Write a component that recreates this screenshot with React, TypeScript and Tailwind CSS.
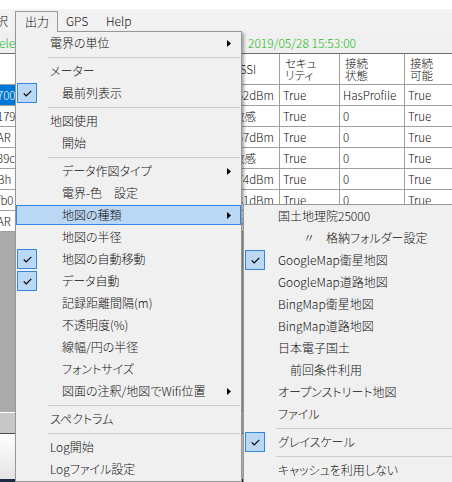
import React from 'react';

type MenuEntry =
  | { sep: true }
  | {
      sep?: false;
      label: React.ReactNode;
      indent?: boolean;
      checked?: boolean;
      sub?: boolean;
      active?: boolean;
    };

const MAIN_MENU: MenuEntry[] = [
  { label: '電界の単位', sub: true },
  { sep: true },
  { label: 'メーター' },
  { label: '最前列表示', indent: true, checked: true },
  { sep: true },
  { label: '地図使用' },
  { label: '開始', indent: true },
  { sep: true },
  { label: 'データ作図タイプ', indent: true, sub: true },
  { label: '電界-色　設定', indent: true },
  { label: '地図の種類', indent: true, sub: true, active: true },
  { label: '地図の半径', indent: true },
  { label: '地図の自動移動', indent: true, checked: true },
  { label: 'データ自動', indent: true, checked: true },
  { label: '記録距離間隔(m)', indent: true },
  { label: '不透明度(%)', indent: true },
  { label: '線幅/円の半径', indent: true },
  { label: 'フォントサイズ', indent: true },
  { label: '図面の注釈/地図でWifi位置', indent: true, sub: true },
  { sep: true },
  { label: 'スペクトラム' },
  { sep: true },
  { label: 'Log開始' },
  { label: 'Logファイル設定' },
];

const MAP_MENU: MenuEntry[] = [
  { label: '国土地理院25000' },
  {
    label: (
      <span className="flex">
        <span className="ml-[25px] w-[23px]">〃</span>
        <span>格納フォルダー設定</span>
      </span>
    ),
  },
  { label: 'GoogleMap衛星地図', checked: true },
  { label: 'GoogleMap道路地図' },
  { label: 'BingMap衛星地図' },
  { label: 'BingMap道路地図' },
  { label: '日本電子国土' },
  { label: '前回条件利用', indent: true },
  { label: 'オープンストリート地図' },
  { label: 'ファイル' },
  { sep: true },
  { label: 'グレイスケール', checked: true },
  { sep: true },
  { label: 'キャッシュを利用しない' },
];

const LEFT_CELLS = ['700', '179', 'AR', '39c', 'Bh', 'fb0', 'AR'];

const ROWS = [
  ['-62dBm', 'True', 'HasProfile', 'True'],
  ['敏感', 'True', '0', 'True'],
  ['-67dBm', 'True', '0', 'True'],
  ['敏感', 'True', '0', 'True'],
  ['-74dBm', 'True', '0', 'True'],
  ['-81dBm', 'True', '0', 'True'],
  ['-85dBm', 'True', '0', 'True'],
];

function Check() {
  return (
    <svg width="9" height="7" viewBox="0 0 9 7">
      <polyline points="0.7,3.4 3.2,5.9 8.3,0.8" fill="none" stroke="#000" strokeWidth="1.2" />
    </svg>
  );
}

function Arrow() {
  return (
    <svg width="4" height="7" viewBox="0 0 4 7">
      <polygon points="0,0 4,3.5 0,7" fill="#000" />
    </svg>
  );
}

function MenuList({ entries }: { entries: MenuEntry[] }) {
  return (
    <>
      {entries.map((e, i) => {
        if (e.sep) {
          return (
            <div key={i} className="h-[6px] flex items-center">
              <div className="h-px flex-1 ml-[32px] mr-[1px] bg-[#cdcdcd]" />
            </div>
          );
        }
        return (
          <div key={i} className="h-[22px] py-[1px]">
            <div
              className={`h-[20px] flex items-center ${
                e.active ? 'bg-[#bad7f4] shadow-[inset_0_0_0_1px_#3385e0]' : ''
              }`}
            >
              <div className="w-[34px] h-[20px] shrink-0 flex">
                {e.checked && (
                  <div className="ml-[1px] w-[20px] h-[20px] border border-[#3385e0] bg-[#bad7f4] flex items-center justify-center">
                    <Check />
                  </div>
                )}
              </div>
              <span className={`whitespace-nowrap ${e.indent ? 'pl-[12px]' : ''}`}>{e.label}</span>
              {e.sub && (
                <span className="ml-auto mr-[10px] flex">
                  <Arrow />
                </span>
              )}
            </div>
          </div>
        );
      })}
    </>
  );
}

export default function App() {
  return (
    <div className="relative w-[452px] h-[482px] overflow-hidden bg-white text-[#111] text-[12px] font-light font-['Noto_Sans_CJK_JP',sans-serif] [font-feature-settings:'palt']">
      {/* window background */}
      <div className="h-[9px] bg-white" />
      <div className="h-[23px] bg-[#f2f2f2] flex items-center whitespace-nowrap">
        <span className="-ml-[4px] w-[19px]">択</span>
        <span className="w-[51px]" />
        <span className="w-[40px]">GPS</span>
        <span>Help</span>
      </div>
      <div className="h-[21px] bg-[#f0f0f0] flex items-center whitespace-nowrap text-[#14b814]">
        <span className="w-[249px] -ml-[1px]">ele</span>
        <span>2019/05/28 15:53:00</span>
      </div>

      <div className="border-t border-[#6e6e6e] grid grid-cols-[15px_215px_50px_60px_65px_70px] text-[11.5px] leading-[12px]">
        <div className="h-[31px] border-b border-[#a0a0a0]" />
        <div className="h-[31px] border-b border-r border-[#a0a0a0]" />
        <div className="h-[31px] border-b border-r border-[#a0a0a0] pl-[3px] flex items-center">RSSI</div>
        <div className="h-[31px] border-b border-r border-[#a0a0a0] pl-[5px] flex flex-col justify-center">
          <span>セキュ</span>
          <span>リティ</span>
        </div>
        <div className="h-[31px] border-b border-r border-[#a0a0a0] pl-[5px] flex flex-col justify-center">
          <span>接続</span>
          <span>状態</span>
        </div>
        <div className="h-[31px] border-b border-[#a0a0a0] pl-[5px] flex flex-col justify-center">
          <span>接続</span>
          <span>可能</span>
        </div>
        {ROWS.map((r, i) => (
          <React.Fragment key={i}>
            <div
              className={`h-[21px] border-b border-[#a0a0a0] overflow-hidden flex items-center whitespace-nowrap ${
                i === 0 ? 'bg-[#0078d7] text-white' : ''
              }`}
            >
              <span className="-ml-[3px]">{LEFT_CELLS[i]}</span>
            </div>
            <div className="h-[21px] border-b border-r border-[#a0a0a0]" />
            {r.map((c, j) => (
              <div
                key={j}
                className={`h-[21px] border-b border-[#a0a0a0] flex items-center whitespace-nowrap pl-[3px] ${
                  j < 3 ? 'border-r' : ''
                }`}
              >
                {c}
              </div>
            ))}
          </React.Fragment>
        ))}
      </div>

      <div className="h-[180px] bg-[#ababab]" />
      <div className="h-px bg-white" />
      <div className="h-[20px] bg-[#c8c8c8]" />
      <div className="h-px bg-[#4a4a4a]" />
      <div className="h-[45px] bg-gradient-to-b from-white to-[#e4e4e4]" />
      <div className="h-[10px] bg-[#1f2a44]" />

      {/* open main menu */}
      <div className="absolute left-[15px] top-[31px] w-[227px] h-[451px] bg-[#f0f0f0] border border-[#979797] shadow-[2px_2px_3px_rgba(0,0,0,0.35)]">
        <MenuList entries={MAIN_MENU} />
      </div>
      <div className="absolute left-[15px] top-[11px] w-[43px] h-[21px] bg-[#f0f0f0] border-l border-t border-r border-[#979797] flex items-center pl-[9px]">
        出力
      </div>

      {/* map type submenu */}
      <div className="absolute left-[243px] top-[204px] w-[230px] h-[280px] bg-[#f0f0f0] border border-[#979797]">
        <MenuList entries={MAP_MENU} />
      </div>
    </div>
  );
}
